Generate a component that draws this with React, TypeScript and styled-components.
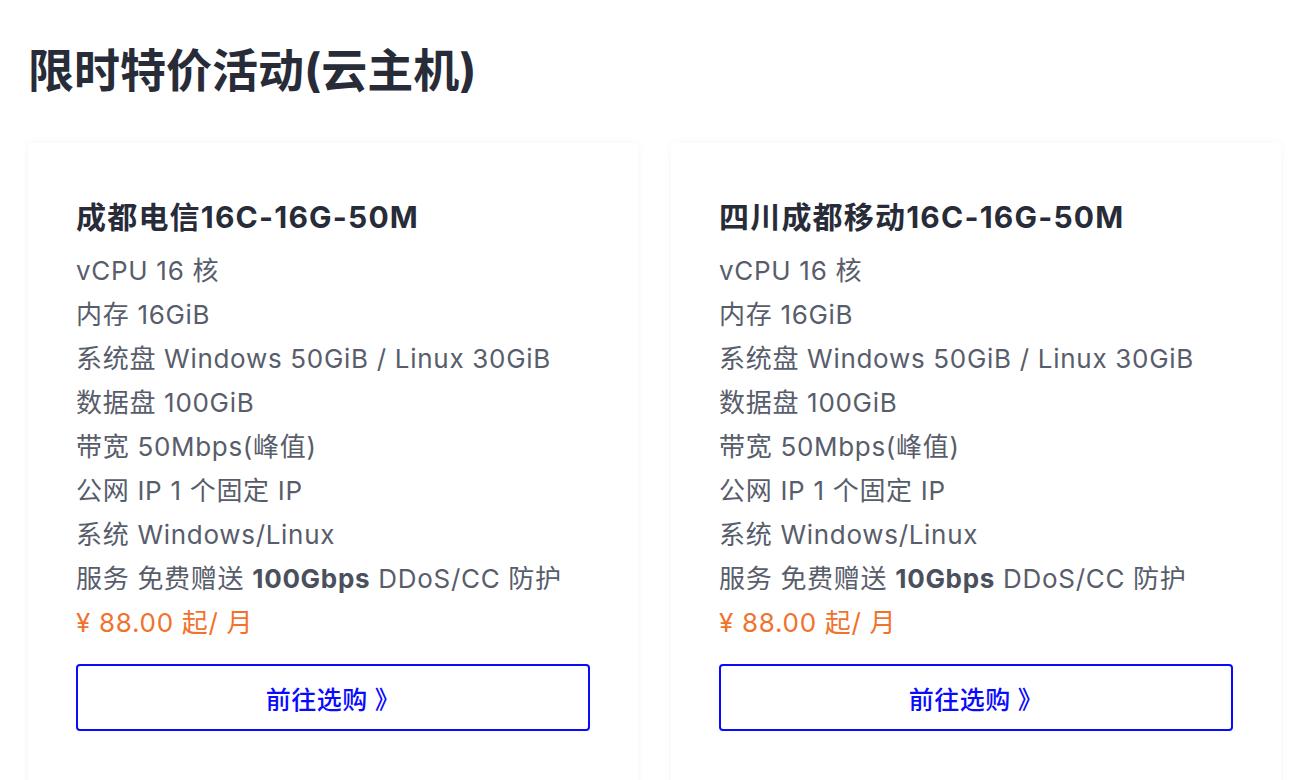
import React from 'react'
import styled, { createGlobalStyle } from 'styled-components'

const GlobalStyle = createGlobalStyle`
  body {
    margin: 0;
    background: #ffffff;
    font-family: Inter, "Noto Sans CJK SC", sans-serif;
  }
`

const plans = [
  { name: '成都电信16C-16G-50M', ddos: '100Gbps' },
  { name: '四川成都移动16C-16G-50M', ddos: '10Gbps' },
]

const PlanCard = ({ plan }) => (
  <Card>
    <CardTitle>{plan.name}</CardTitle>
    <Specs>
      <Spec>vCPU 16 核</Spec>
      <Spec>内存 16GiB</Spec>
      <Spec>系统盘 Windows 50GiB / Linux 30GiB</Spec>
      <Spec>数据盘 100GiB</Spec>
      <Spec>带宽 50Mbps(峰值)</Spec>
      <Spec>公网 IP 1 个固定 IP</Spec>
      <Spec>系统 Windows/Linux</Spec>
      <Spec>
        服务 免费赠送 <strong>{plan.ddos}</strong> DDoS/CC 防护
      </Spec>
      <Price>¥ 88.00 起/ 月</Price>
    </Specs>
    <BuyButton>前往选购 》</BuyButton>
  </Card>
)

const App = () => (
  <Page>
    <GlobalStyle />
    <Heading>限时特价活动(云主机)</Heading>
    <CardGrid>
      {plans.map((plan) => (
        <PlanCard plan={plan} key={plan.name} />
      ))}
    </CardGrid>
  </Page>
)

const Page = styled.div`
  padding: 40px 15px 0 28px;
  height: 780px;
  box-sizing: border-box;
  overflow: hidden;
`
const Heading = styled.h1`
  margin: 0;
  font-size: 46px;
  line-height: 60px;
  font-weight: 700;
  color: #272c38;
`
const CardGrid = styled.div`
  display: grid;
  grid-template-columns: 610px 610px;
  gap: 33px;
  margin-top: 43px;
`
const Card = styled.div`
  background: #fff;
  border-radius: 4px;
  box-shadow: 0 0 10px rgba(0, 0, 0, 0.045);
  padding: 56px 48px 48px 48px;
  height: 700px;
  box-sizing: border-box;
`
const CardTitle = styled.div`
  font-size: 30px;
  letter-spacing: 1.2px;
  font-weight: 700;
  color: #272c38;
  line-height: 36px;
`
const Specs = styled.div`
  margin-top: 14px;
  display: flex;
  flex-direction: column;
`
const Spec = styled.div`
  font-size: 26px;
  letter-spacing: 0.7px;
  line-height: 44px;
  color: #585d6b;
  white-space: nowrap;
  strong {
    font-weight: 700;
    color: #4b505d;
  }
`
const Price = styled(Spec)`
  color: #f0722c;
`
const BuyButton = styled.button`
  display: block;
  width: 100%;
  height: 67px;
  margin-top: 19px;
  border: 2px solid #0a0aff;
  border-radius: 4px;
  background: #fff;
  color: #0a0aff;
  font-family: Inter, "Noto Sans CJK SC", sans-serif;
  font-size: 25px;
  font-weight: 500;
  letter-spacing: 0.5px;
  cursor: pointer;
`

export default App
